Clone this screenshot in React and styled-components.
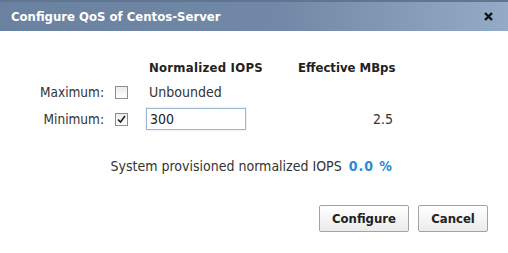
import React, { useState } from 'react';
import styled, { createGlobalStyle } from 'styled-components';

const GlobalStyle = createGlobalStyle`
  html, body {
    margin: 0;
    padding: 0;
    background: #ffffff;
  }
  body {
    font-family: "DejaVu Sans Condensed", "DejaVu Sans", Verdana, sans-serif;
    font-size: 13px;
    color: #333333;
  }
`;

const Dialog = styled.div`
  width: 508px;
  height: 253px;
  background: #ffffff;
  display: flex;
  flex-direction: column;
`;

const TitleBar = styled.div`
  height: 31px;
  box-sizing: border-box;
  display: flex;
  align-items: center;
  justify-content: space-between;
  padding: 0 15px 0 11px;
  background: linear-gradient(to right, #6a829f 0%, #7189a6 55%, #93abc6 100%);
  border-top: 2px solid #5f7591;
`;

const Title = styled.div`
  color: #ffffff;
  font-weight: bold;
  font-size: 13px;
`;

const Close = styled.div`
  display: flex;
  align-items: center;
  cursor: pointer;
`;

const Body = styled.div`
  flex: 1;
  display: flex;
  flex-direction: column;
  padding-top: 27px;
`;

const Grid = styled.div`
  display: grid;
  grid-template-columns: 104px 42px 152px 95px;
  grid-template-rows: 18px 18px 22px;
  row-gap: 7px;
  align-items: center;
  white-space: nowrap;
`;

const Header = styled.div`
  font-weight: bold;
  color: #222222;
  letter-spacing: ${(p) => p.$spacing || 0}px;
  padding-left: ${(p) => p.$indent || 0}px;
`;

const Label = styled.div`
  text-align: right;
  font-size: 13.5px;
`;

const Check = styled.div`
  width: 11px;
  height: 11px;
  margin-left: 11px;
  border: 1px solid #8e8e8e;
  background: linear-gradient(#ececec, #ffffff);
  display: flex;
  align-items: center;
  justify-content: center;
`;

const Value = styled.div`
  padding-left: 3px;
  font-size: 14px;
  text-align: ${(p) => (p.$right ? 'right' : 'left')};
`;

const Input = styled.input`
  width: 100px;
  height: 22px;
  box-sizing: border-box;
  border: 1px solid #9db6cf;
  box-shadow: 0 0 2px #c9d9e8;
  padding: 0 0 0 3px;
  font-family: inherit;
  font-size: 14px;
  color: #222222;
  outline: none;
`;

const Status = styled.div`
  display: flex;
  justify-content: flex-end;
  align-items: baseline;
  gap: 7px;
  width: 393px;
  height: 16px;
  line-height: 16px;
  margin-top: 28px;
  font-size: 14px;
  white-space: nowrap;
`;

const Percent = styled.span`
  color: #2a8ad8;
  font-weight: bold;
  letter-spacing: 1px;
`;

const Buttons = styled.div`
  display: flex;
  justify-content: flex-end;
  gap: 9px;
  padding-right: 20px;
  margin-top: 31px;
`;

const Button = styled.button`
  width: ${(p) => p.$w}px;
  height: 27px;
  padding: 0;
  border: 1px solid #a3a3a3;
  border-radius: 2px;
  background: linear-gradient(#ffffff, #ebebeb);
  font-family: inherit;
  font-size: 13px;
  font-weight: bold;
  color: #222222;
  cursor: pointer;
`;

function CheckMark() {
  return (
    <svg width="9" height="9" viewBox="0 0 9 9">
      <path d="M1 4.5 L3.5 7 L8 1" fill="none" stroke="#222" strokeWidth="1.6" />
    </svg>
  );
}

function CloseIcon() {
  return (
    <svg width="9" height="9" viewBox="0 0 9 9">
      <path d="M1 1 L8 8 M8 1 L1 8" fill="none" stroke="#111" strokeWidth="2.4" />
    </svg>
  );
}

export default function App() {
  const [min, setMin] = useState('300');

  return (
    <>
      <GlobalStyle />
      <Dialog>
        <TitleBar>
          <Title>Configure QoS of Centos-Server</Title>
          <Close>
            <CloseIcon />
          </Close>
        </TitleBar>
        <Body>
          <Grid>
            <div />
            <div />
            <Header $indent={3} $spacing={0.25}>Normalized IOPS</Header>
            <Header>Effective MBps</Header>

            <Label>Maximum:</Label>
            <Check />
            <Value>Unbounded</Value>
            <div />

            <Label>Minimum:</Label>
            <Check>
              <CheckMark />
            </Check>
            <div>
              <Input value={min} onChange={(e) => setMin(e.target.value)} />
            </div>
            <Value $right>2.5</Value>
          </Grid>
          <Status>
            <span>System provisioned normalized IOPS</span>
            <Percent>0.0 %</Percent>
          </Status>
          <Buttons>
            <Button $w={90}>Configure</Button>
            <Button $w={70}>Cancel</Button>
          </Buttons>
        </Body>
      </Dialog>
    </>
  );
}
